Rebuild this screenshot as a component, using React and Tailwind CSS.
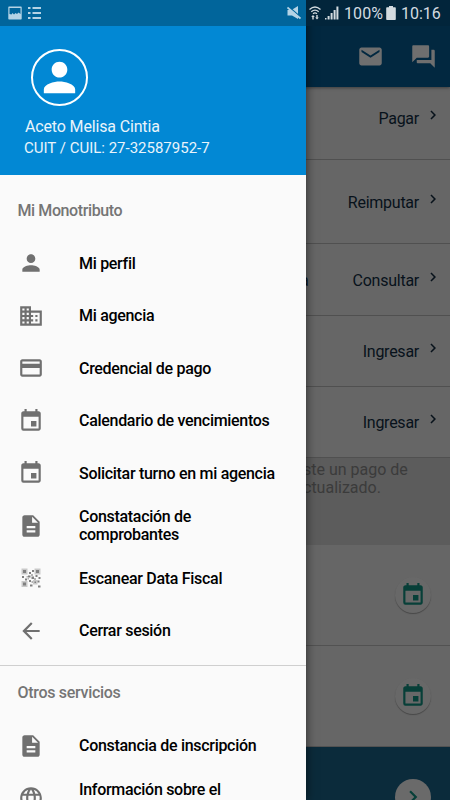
import React from 'react'
import {
  MdPerson,
  MdDomain,
  MdPayment,
  MdEvent,
  MdDescription,
  MdArrowBack,
  MdLanguage,
  MdEmail,
  MdForum,
  MdChevronRight,
} from 'react-icons/md'

function QrIcon() {
  return (
    <svg width="20" height="20" viewBox="0 0 20 20">
      <path fill="#c9c9c9" d="M0.5 0.5h6v6h-6zM13.5 0.5h6v6h-6zM0.5 13h6v6h-6zM12 12h4.500v4.500h-4.500z" />
      <path
        fill="#818181"
        d="M2 2h3v3H2zM15 2h3v3h-3zM2 14.500h3v3H2zM8 4h2v2H8zM11 2h2v2h-2zM7 7.500h2.500v2H7zM1 8h2v2H1zM4 10.500h2v2H4zM10.500 8.500h2.500v2.500h-2.500zM14.500 7h2v2h-2zM17.500 9h2v2h-2zM8 12h2v2H8zM16.500 12.500h2v2h-2zM9 16.500h2.500v2H9zM13.500 13.500h1.500v1.500h-1.500zM17 17.500h2.500v2H17z"
      />
      <path fill="#b5b5b5" d="M5.500 8h1.500v1.500H5.500zM10 6h2v2h-2zM13 10h2v2h-2zM6.500 10h1.500v1.500H6.500zM10.500 13h1.500v2h-1.500z" />
    </svg>
  )
}

const mainItems = [
  { icon: MdPerson, label: 'Mi perfil' },
  { icon: MdDomain, label: 'Mi agencia' },
  { icon: MdPayment, label: 'Credencial de pago' },
  { icon: MdEvent, label: 'Calendario de vencimientos' },
  { icon: MdEvent, label: 'Solicitar turno en mi agencia' },
  { icon: MdDescription, label: 'Constatación de comprobantes' },
  { icon: QrIcon, label: 'Escanear Data Fiscal' },
  { icon: MdArrowBack, label: 'Cerrar sesión' },
]

const otherItems = [
  { icon: MdDescription, label: 'Constancia de inscripción' },
  { icon: MdLanguage, label: 'Información sobre el', top: true },
]

const actions = [
  { label: 'Pagar', row: 'h-[73px] pt-[19px]' },
  { label: 'Reimputar', row: 'h-[84px] pt-[30px]' },
  { label: 'Consultar', row: 'h-[72px] pt-[24px]', extra: 'a' },
  { label: 'Ingresar', row: 'h-[71px] pt-[23px]' },
  { label: 'Ingresar', row: 'h-[71px] pt-[23px]' },
]

function StatusBar() {
  return (
    <div className="absolute inset-x-0 top-0 h-[26px] flex items-center text-[#d3dbe0]">
      <div className="w-[306px] h-full bg-[#01659b] flex items-center pl-2 pr-[5px] text-[#b4d3e5]">
        <svg width="14" height="14" viewBox="0 0 14 14">
          <path
            fill="currentColor"
            fillRule="evenodd"
            d="M1 0.500h12q.7 0 .7.700v11.600q0 .7-.7.700H1q-.7 0-.7-.700V1.200q0-.7.700-.700zM1.500 2v6l2 .5 1-1.500 1.500 1.500 1.500-1.500 1.500 1 1.500-1.500 2 1.500V2z"
          />
        </svg>
        <svg className="ml-[6px]" width="14" height="14" viewBox="0 0 14 14">
          <path fill="currentColor" d="M0 1h2.500v2H0zM4.500 1H13v2H4.500zM0 6h2.500v2H0zM4.500 6H13v2H4.500zM0 11h2.500v2H0zM4.500 11H13v2H4.500z" />
        </svg>
        <svg className="ml-auto" width="14" height="14" viewBox="0 0 14 14">
          <path fill="currentColor" d="M0.500 4h4L11 0v13L5 9.500H0.500z" />
          <path stroke="#01659b" strokeWidth="1.300" d="M1.500 0.500l12 10.500" />
          <path stroke="currentColor" strokeWidth="1.700" d="M0.500 1.500l13 11" />
        </svg>
      </div>
      <div className="flex-1 h-full bg-[#02253b] flex items-center">
        <svg className="ml-[3px] shrink-0" width="12" height="14" viewBox="0 0 12 14" fill="none" stroke="currentColor">
          <path strokeWidth="1.300" d="M0.500 3.500q5.500-5 11 0M2.300 5.700q3.700-3.200 7.400 0M4 7.700q2-1.500 4 0" />
          <path fill="currentColor" stroke="none" d="M4 9l1.800 2H4.700v2.500H3.300V11H2.200zM8 13.500L6.200 11.500h1.100V9h1.400v2.500h1.100z" />
        </svg>
        <svg className="ml-[4px] shrink-0" width="14" height="14" viewBox="0 0 14 14">
          <path fill="currentColor" d="M0 12h1.500v1.500H0zM2.600 10h2v3.500h-2zM5.600 7h2v6.500h-2zM8.600 4h2v9.500h-2z" />
          <path fill="currentColor" d="M11.400 0.500h2v13h-2z" />
        </svg>
        <span className="ml-[5px] w-[39px] shrink-0 text-[16px] leading-none tracking-[0.1px] pt-[2px] whitespace-nowrap">100%</span>
        <svg className="ml-[3px] shrink-0" width="10" height="14" viewBox="0 0 10 14">
          <path fill="currentColor" d="M3 0h4v1.200h2q.8 0 .8.800v11.200q0 .8-.8.800H1q-.8 0-.8-.800V2q0-.8.800-.800h2z" />
        </svg>
        <span className="ml-[5px] text-[16px] leading-none pt-[2px]">10:16</span>
      </div>
    </div>
  )
}

function MenuItem({ icon: Icon, label, top }) {
  return (
    <li className="h-[52.5px] flex items-center">
      <div className="w-[61px] flex justify-center text-[#707070]">
        <Icon size={26} />
      </div>
      <span
        className={`ml-[18px] w-[205px] text-[16px] leading-[18px] tracking-[-0.3px] font-medium text-black ${
          top ? 'self-start mt-[9px]' : 'pt-px'
        }`}
      >
        {label}
      </span>
    </li>
  )
}

function Drawer() {
  return (
    <aside className="absolute left-0 top-0 w-[306px] h-full overflow-hidden bg-[#fafafa] shadow-[0_0_10px_rgba(0,0,0,0.6)]">
      <div className="h-[175px] pt-[49px] bg-[#0288d4] text-[#e9f4fb]">
        <div className="ml-[31px] size-[57px] rounded-full border-2 border-white flex items-center justify-center text-white">
          <MdPerson size={47} />
        </div>
        <p className="mt-[11px] ml-[25px] text-[16px] leading-5 tracking-[-0.15px]">Aceto Melisa Cintia</p>
        <p className="mt-px ml-[24px] text-[15px] leading-5">CUIT / CUIL: 27-32587952-7</p>
      </div>
      <h2 className="h-[61.8px] pt-[26px] pl-[17.5px] text-[16px] leading-5 tracking-[-0.4px] font-medium text-[#757575]">
        Mi Monotributo
      </h2>
      <ul>
        {mainItems.map((item) => (
          <MenuItem key={item.label} {...item} />
        ))}
      </ul>
      <div className="mt-[8.2px] border-t border-[#cfcfcf]"></div>
      <h2 className="h-[53.5px] pt-[17px] pl-[17.5px] text-[16px] leading-5 tracking-[-0.3px] font-medium text-[#757575]">
        Otros servicios
      </h2>
      <ul>
        {otherItems.map((item) => (
          <MenuItem key={item.label} {...item} />
        ))}
      </ul>
    </aside>
  )
}

function EventRow({ height }) {
  return (
    <div className={`${height} pr-[19px] flex items-center justify-end border-b border-[#525252]`}>
      <div className="size-[36px] rounded-full bg-[#686868] shadow-[0_1px_1px_rgba(0,0,0,0.3)] flex items-center justify-center text-[#073f38]">
        <MdEvent size={26} />
      </div>
    </div>
  )
}

function App() {
  return (
    <div className="relative w-[450px] h-[800px] overflow-hidden bg-[#666666] font-['Roboto',sans-serif]">
      <header className="h-[87px] pt-[26px] pr-[13px] flex items-center justify-end gap-[26px] bg-[#022840] text-[#6f6f6f] shadow-[0_1px_3px_rgba(0,0,0,0.4)]">
        <MdEmail size={27} />
        <MdForum size={27} />
      </header>
      {actions.map(({ label, row, extra }, i) => (
        <div key={i} className={`${row} pr-[8px] flex items-start justify-end border-b border-[#505050] text-[#08121b]`}>
          {extra && <span className="mr-auto ml-[300px] pt-px text-[16px] leading-6">{extra}</span>}
          <span className="pt-px text-[16px] leading-6 tracking-[-0.25px]">{label}</span>
          <MdChevronRight className="ml-[5px]" size={18} />
        </div>
      ))}
      <div className="h-[87px] pl-[303px] pt-[3px] bg-[#5c5c5c] text-[16px] leading-[18px] text-[#3b3b3b]">
        <p>ste un pago de</p>
        <p>ctualizado.</p>
      </div>
      <EventRow height="h-[101px]" />
      <EventRow height="h-[101px]" />
      <div className="h-[53px] pt-[32px] pr-[19px] flex justify-end bg-[#0b2b3b]">
        <div className="size-[36px] rounded-full bg-[#6a6a6a] flex items-center justify-center text-[#073f38]">
          <MdChevronRight size={26} />
        </div>
      </div>
      <Drawer />
      <StatusBar />
    </div>
  )
}

export default App
